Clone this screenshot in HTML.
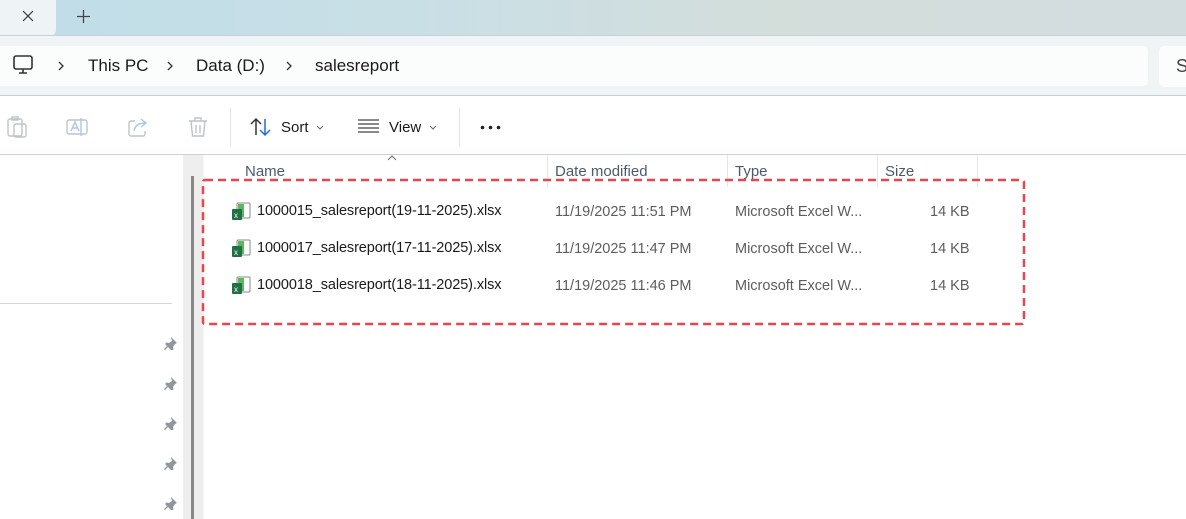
<!DOCTYPE html>
<html><head><style>
*{margin:0;padding:0;box-sizing:border-box}
body{width:1186px;height:519px;overflow:hidden;background:#fff;font-family:"Liberation Sans",sans-serif;position:relative;color:#1a1a1a}
.a{position:absolute}
.t{white-space:nowrap}
</style></head><body>
<div class="a" style="left:0;top:0;width:1186px;height:36px;background:linear-gradient(90deg,#bfdde8 0%,#c9dfe6 35%,#d3dedb 65%,#d3dcdf 100%)"></div>
<div class="a" style="left:0;top:0;width:56px;height:36px;background:#eef3f5;border-bottom-right-radius:6px"></div>
<svg class="a" style="left:22px;top:10px" width="12" height="12" viewBox="0 0 12 12"><path d="M1 1l10 10M11 1L1 11" stroke="#333" stroke-width="1.2"/></svg>
<svg class="a" style="left:77px;top:10px" width="13" height="13" viewBox="0 0 13 13"><path d="M6.5 0v13M0 6.5h13" stroke="#444" stroke-width="1.3"/></svg>
<div class="a" style="left:0;top:35px;width:1186px;height:61px;background:#f1f4f6;border-top:1px solid #c8d2d6;border-bottom:1px solid #c4d0d4"></div>
<div class="a" style="left:0;top:46px;width:1148px;height:40px;background:#fbfcfc;border-radius:0 5px 5px 0"></div>
<div class="a" style="left:1159px;top:46px;width:40px;height:41px;background:#fbfcfc;border-radius:5px"></div>
<div class="a t" style="left:1176px;top:56px;font-size:18px;color:#444">S</div>
<svg class="a" style="left:13px;top:55px" width="21" height="20" viewBox="0 0 21 20"><rect x="1" y="1" width="18" height="13" rx="2" fill="none" stroke="#333" stroke-width="1.6"/><path d="M6 18h8M10 14v4" stroke="#333" stroke-width="1.6"/></svg>
<svg class="a" style="left:58px;top:61px" width="7" height="10" viewBox="0 0 7 10"><path d="M1 1l4 4-4 4" fill="none" stroke="#333" stroke-width="1.3"/></svg>
<div class="a t" style="left:88px;top:56px;font-size:17px">This PC</div>
<svg class="a" style="left:167px;top:61px" width="7" height="10" viewBox="0 0 7 10"><path d="M1 1l4 4-4 4" fill="none" stroke="#333" stroke-width="1.3"/></svg>
<div class="a t" style="left:196px;top:56px;font-size:17px">Data (D:)</div>
<svg class="a" style="left:286px;top:61px" width="7" height="10" viewBox="0 0 7 10"><path d="M1 1l4 4-4 4" fill="none" stroke="#333" stroke-width="1.3"/></svg>
<div class="a t" style="left:315px;top:56px;font-size:17px">salesreport</div>
<!-- toolbar -->
<svg class="a" style="left:6px;top:116px" width="22" height="22" viewBox="0 0 22 22" fill="none" stroke="#bcc4ca" stroke-width="1.4"><rect x="2" y="3" width="14" height="17" rx="2"/><rect x="8" y="8" width="12" height="13" rx="2"/><rect x="6" y="1" width="6" height="3"/></svg>
<svg class="a" style="left:66px;top:116px" width="22" height="22" viewBox="0 0 22 22" fill="none" stroke="#bcc4ca" stroke-width="1.4"><rect x="1" y="4" width="20" height="14" rx="2"/><path d="M5 15l4-9 4 9M6.5 12h5" stroke="#a8c8e8"/><path d="M15 2v18" stroke="#a8c8e8"/></svg>
<svg class="a" style="left:127px;top:116px" width="22" height="22" viewBox="0 0 22 22" fill="none" stroke="#bcc4ca" stroke-width="1.4"><path d="M8 5H4a2 2 0 0 0-2 2v11a2 2 0 0 0 2 2h12a2 2 0 0 0 2-2v-3"/><path d="M7 15c1-6 5-8 11-8M14 3l5 4-5 4" stroke="#a8c8e8"/></svg>
<svg class="a" style="left:187px;top:116px" width="22" height="22" viewBox="0 0 22 22" fill="none" stroke="#bcc4ca" stroke-width="1.4"><path d="M2 5h18M8 5V2h6v3M4 5l1.5 15h11L18 5M9 9v8M13 9v8"/></svg>
<div class="a" style="left:230px;top:108px;width:1px;height:38px;background:#e3e3e3"></div>
<svg class="a" style="left:250px;top:117px" width="22" height="20" viewBox="0 0 22 20" fill="none" stroke-width="1.5"><path d="M6 18V2M1 7l5-5 5 5" stroke="#333"/><path d="M15 2v16M10 13l5 5 5-5" stroke="#1a73c8"/></svg>
<div class="a t" style="left:281px;top:119px;font-size:15px">Sort</div>
<svg class="a" style="left:316px;top:125px" width="8" height="5" viewBox="0 0 8 5"><path d="M1 1l3 3 3-3" fill="none" stroke="#666" stroke-width="1"/></svg>
<svg class="a" style="left:358px;top:119px" width="21" height="14" viewBox="0 0 21 14" stroke="#444" stroke-width="1.3"><path d="M0 1h21M0 5h21M0 9h21M0 13h21"/></svg>
<div class="a t" style="left:389px;top:119px;font-size:15px">View</div>
<svg class="a" style="left:429px;top:125px" width="8" height="5" viewBox="0 0 8 5"><path d="M1 1l3 3 3-3" fill="none" stroke="#666" stroke-width="1"/></svg>
<div class="a" style="left:459px;top:108px;width:1px;height:38px;background:#e3e3e3"></div>
<svg class="a" style="left:480px;top:125px" width="22" height="5"><circle cx="2.5" cy="2.5" r="1.8" fill="#222"/><circle cx="10.5" cy="2.5" r="1.8" fill="#222"/><circle cx="18.5" cy="2.5" r="1.8" fill="#222"/></svg>
<div class="a" style="left:0;top:154px;width:1186px;height:1px;background:#c8d3d8"></div>
<!-- nav -->
<div class="a" style="left:0;top:303px;width:172px;height:1px;background:#d6d6d6"></div>
<div class="a" style="left:183px;top:155px;width:20px;height:364px;background:#eeeeee"></div>
<div class="a" style="left:191px;top:176px;width:3px;height:343px;background:#888"></div>
<div class="a" style="left:203px;top:155px;width:1px;height:364px;background:#f4f4f4"></div>
<svg width="0" height="0" style="position:absolute"><defs><g id="pin"><path d="M7 1l6 6-2 1-2 3 .5 2.5L8 15 1 8l1.5-1.5L5 7l3-2z" fill="#8f969c"/><path d="M4 10L0.5 13.5" stroke="#8f969c" stroke-width="1.3"/></g></defs></svg>
<svg class="a" style="left:164px;top:336px" width="14" height="14"><use href="#pin"/></svg>
<svg class="a" style="left:164px;top:376px" width="14" height="14"><use href="#pin"/></svg>
<svg class="a" style="left:164px;top:416px" width="14" height="14"><use href="#pin"/></svg>
<svg class="a" style="left:164px;top:456px" width="14" height="14"><use href="#pin"/></svg>
<svg class="a" style="left:164px;top:496px" width="14" height="14"><use href="#pin"/></svg>
<!-- header -->
<svg class="a" style="left:387px;top:155px" width="10" height="6" viewBox="0 0 10 6"><path d="M1 5l4-4 4 4" fill="none" stroke="#666" stroke-width="1"/></svg>
<div class="a" style="left:547px;top:155px;width:1px;height:32px;background:#e5e5e5"></div>
<div class="a" style="left:727px;top:155px;width:1px;height:32px;background:#e5e5e5"></div>
<div class="a" style="left:877px;top:155px;width:1px;height:32px;background:#e5e5e5"></div>
<div class="a" style="left:977px;top:155px;width:1px;height:32px;background:#e5e5e5"></div>
<div class="a t" style="left:245px;top:163px;font-size:15px;color:#4c5a6e">Name</div>
<div class="a t" style="left:555px;top:163px;font-size:15px;color:#4c5a6e">Date modified</div>
<div class="a t" style="left:735px;top:163px;font-size:15px;color:#4c5a6e">Type</div>
<div class="a t" style="left:885px;top:163px;font-size:15px;color:#4c5a6e">Size</div>
<!-- rows -->
<svg width="0" height="0" style="position:absolute"><defs><g id="xl"><rect x="6" y="1" width="13" height="15" rx="1" fill="#fff" stroke="#888" stroke-width="1"/><rect x="7" y="2" width="6" height="13" fill="#5cb85c"/><rect x="1" y="7" width="10" height="11" rx="1" fill="#1e7145"/><text x="3" y="16" font-size="8" fill="#fff" font-family="Liberation Sans">x</text></g></defs></svg>
<svg class="a" style="left:231px;top:202px" width="20" height="19"><use href="#xl"/></svg>
<svg class="a" style="left:231px;top:239px" width="20" height="19"><use href="#xl"/></svg>
<svg class="a" style="left:231px;top:276px" width="20" height="19"><use href="#xl"/></svg>
<div class="a t" style="left:257px;top:203px;font-size:14.5px;letter-spacing:-0.1px">1000015_salesreport(19-11-2025).xlsx</div>
<div class="a t" style="left:257px;top:240px;font-size:14.5px;letter-spacing:-0.1px">1000017_salesreport(17-11-2025).xlsx</div>
<div class="a t" style="left:257px;top:277px;font-size:14.5px;letter-spacing:-0.1px">1000018_salesreport(18-11-2025).xlsx</div>
<div class="a t" style="left:555px;top:204px;font-size:14.5px;color:#5d5d5d">11/19/2025 11:51 PM</div>
<div class="a t" style="left:555px;top:241px;font-size:14.5px;color:#5d5d5d">11/19/2025 11:47 PM</div>
<div class="a t" style="left:555px;top:278px;font-size:14.5px;color:#5d5d5d">11/19/2025 11:46 PM</div>
<div class="a t" style="left:735px;top:204px;font-size:14.5px;color:#5d5d5d">Microsoft Excel W...</div>
<div class="a t" style="left:735px;top:241px;font-size:14.5px;color:#5d5d5d">Microsoft Excel W...</div>
<div class="a t" style="left:735px;top:278px;font-size:14.5px;color:#5d5d5d">Microsoft Excel W...</div>
<div class="a t" style="left:930px;top:204px;font-size:14.5px;color:#5d5d5d">14 KB</div>
<div class="a t" style="left:930px;top:241px;font-size:14.5px;color:#5d5d5d">14 KB</div>
<div class="a t" style="left:930px;top:278px;font-size:14.5px;color:#5d5d5d">14 KB</div>
<svg class="a" style="left:201px;top:178px" width="826" height="150"><rect x="2" y="2" width="821" height="144" rx="2" fill="none" stroke="#e8454f" stroke-width="2.5" stroke-dasharray="8,5"/></svg>
</body></html>
